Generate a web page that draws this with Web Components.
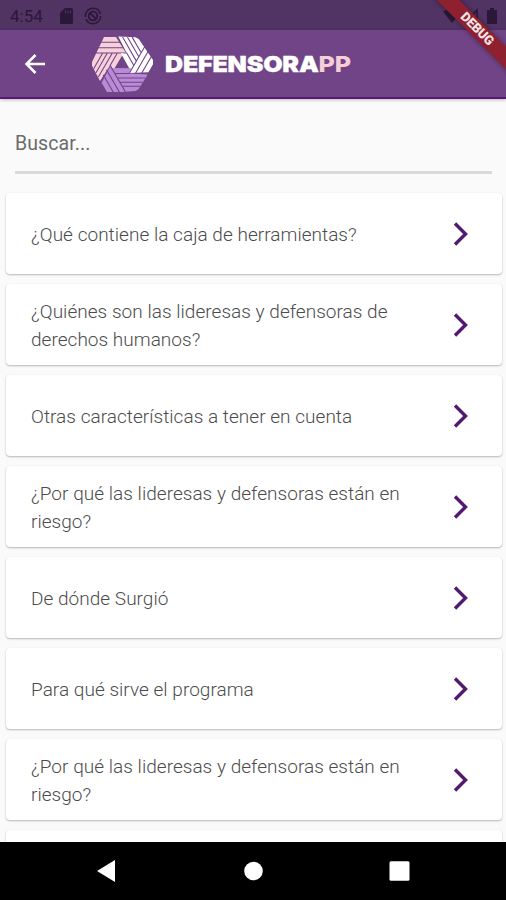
<!DOCTYPE html>
<html lang="es">
<head>
<meta charset="utf-8">
<title>DefensorAPP</title>
<style>
body{margin:0;width:506px;height:900px;overflow:hidden;background:#fafafa;font-family:Roboto,"Liberation Sans",sans-serif}
</style>
</head>
<body>
<defensora-screen></defensora-screen>
<script>
const define=(name,html)=>customElements.define(name,class extends HTMLElement{
  constructor(){super();this.attachShadow({mode:'open'}).innerHTML=html;}
});

define('status-bar',`<style>
:host{display:flex;height:30px;background:#513364;color:#2b1739;align-items:center;box-sizing:border-box;padding:2px 8px 0 10px}
.time{font-size:17px;line-height:20px;width:50px;white-space:nowrap}
svg{display:block;flex:none}.gap{flex:1}
</style>
<span class="time">4:54</span>
<svg width="13" height="16" viewBox="0 0 13 16"><path fill="currentColor" d="M5 0h6.500Q13 0 13 1.500v13Q13 16 11.500 16H1.500Q0 16 0 14.500V5z"/><path stroke="#513364" stroke-width="1" d="M5.500 2.500v3M8 2.500v3M10.500 2.500v3"/></svg>
<svg style="margin-left:11px" width="18" height="18" viewBox="0 0 18 18" fill="none" stroke="currentColor"><circle cx="9" cy="9" r="7.700" stroke-width="1.500" stroke-dasharray="21 2 23 2"/><circle cx="9" cy="9" r="4.300" stroke-width="1.800"/><path stroke-width="1.800" d="M6 6l6 6"/></svg>
<span class="gap"></span>
<svg width="55" height="20" viewBox="0 0 55 20" fill="currentColor"><path d="M0 5.500Q9 0 18 5.500L9 17z"/><path fill="none" stroke="currentColor" stroke-width="1.500" d="M34 4v12H23z"/><path d="M47 2h4v2h3v14H44V4h3z"/></svg>`);

define('brand-mark',`<style>:host{display:block;width:62px;height:56px}svg{display:block}</style>
<svg width="62" height="56" viewBox="-93 -84 186 168">
<defs><g id="arm"><path d="M-54-81H-18L12-33H5L-26 19L-35 3L-66 51L-90 5V-6Z"/>
<path fill="none" stroke="#704487" stroke-width="3.200" d="M-78-65H0M-86-49H8M-92-33H14M-14-33L-36 5M-29-33L-71 39M-44-33L-78 26M-58-33L-85 14"/></g></defs>
<use href="#arm" fill="#f8d0da"/><use href="#arm" fill="#fff" transform="rotate(120)"/><use href="#arm" fill="#b98ad5" transform="rotate(240)"/>
</svg>`);

define('app-header',`<style>
:host{display:flex;height:69px;box-sizing:border-box;background:#704487;border-bottom:2px solid #5b1679;align-items:center;padding-left:24px;box-shadow:0 1px 3px #0004}
.back{display:block;width:22px;margin-right:45px}
.name{display:block;margin-left:12px;font:900 22px/30px Inter,sans-serif;letter-spacing:-.2px;color:#fff;-webkit-text-stroke:.3px #fff;white-space:nowrap;transform:scaleX(1.14);transform-origin:0 50%}
.name b{font-weight:800;color:#f6ced8;-webkit-text-stroke:0}
</style>
<svg class="back" width="22" height="22" viewBox="0 0 22 22" fill="none" stroke="#fff" stroke-width="2.500"><path d="M21 11H3M11.500 2L2.500 11l9 9"/></svg>
<brand-mark></brand-mark><span class="name">DEFENSORA<b>PP</b></span>`);

define('debug-ribbon',`<style>
:host{display:block;position:absolute;top:0;right:0;width:76px;height:76px;overflow:hidden;pointer-events:none}
span{position:absolute;left:-18px;top:21px;width:130px;height:16px;transform:rotate(45deg);background:#8f2030;color:#f6e4e6;font:900 13px/16px Roboto,sans-serif;letter-spacing:-.2px;text-align:center;box-shadow:0 0 5px #0006}
</style><span>DEBUG</span>`);

define('search-field',`<style>
:host{display:block;height:75px;box-sizing:border-box;margin:0 14px 0 15px;padding-top:32px;border-bottom:3px solid #dadada;font-size:19.500px;line-height:26px;color:#6b6b6b;letter-spacing:.1px}
</style><slot></slot>`);

define('topic-card',`<style>
:host{display:flex;align-items:center;flex:none;height:81px;box-sizing:border-box;padding:0 33px 0 25px;background:#fff;border-radius:4px;box-shadow:0 1px 2px #0004,0 0 1px #0001;color:#4c4c4c}
.label{flex:1;padding-top:3px;font-size:19px;font-weight:300;line-height:28px;letter-spacing:.03px;white-space:pre-line}
svg{display:block}
</style><span class="label"><slot></slot></span>
<svg width="17" height="26" viewBox="0 0 17 26" fill="none" stroke="#54196f" stroke-width="3.400"><path d="M3 2.500L13.500 13L3 23.500"/></svg>`);

define('topic-list',`<style>
:host{display:flex;flex-direction:column;gap:10px;padding:19px 4px 0 6px;height:668px;box-sizing:border-box;overflow:hidden}
</style><slot></slot>`);

define('system-nav',`<style>
:host{display:flex;height:58px;background:#000;align-items:center;justify-content:space-between;padding:0 96px;box-sizing:border-box}
svg{display:block}
</style>
<svg width="20" height="22" viewBox="0 0 20 22" fill="#fff"><path d="M19 0v22L1 11z"/></svg>
<svg width="20" height="20" viewBox="0 0 20 20" fill="#fff"><circle cx="10.500" cy="10" r="9.300"/></svg>
<svg width="21" height="20" viewBox="0 0 21 20" fill="#fff"><rect x=".5" y=".2" width="20" height="19.600" rx="1.500"/></svg>`);

define('defensora-screen',`<style>
:host{display:flex;flex-direction:column;position:relative;width:506px;height:900px;overflow:hidden;background:#fafafa}
</style>
<status-bar></status-bar><app-header></app-header>
<search-field>Buscar...</search-field>
<topic-list>
<topic-card>¿Qué contiene la caja de herramientas?</topic-card>
<topic-card>¿Quiénes son las lideresas y defensoras de
derechos humanos?</topic-card>
<topic-card>Otras características a tener en cuenta</topic-card>
<topic-card>¿Por qué las lideresas y defensoras están en
riesgo?</topic-card>
<topic-card>De dónde Surgió</topic-card>
<topic-card>Para qué sirve el programa</topic-card>
<topic-card>¿Por qué las lideresas y defensoras están en
riesgo?</topic-card>
<topic-card></topic-card>
</topic-list>
<system-nav></system-nav><debug-ribbon></debug-ribbon>`);
</script>
</body>
</html>
